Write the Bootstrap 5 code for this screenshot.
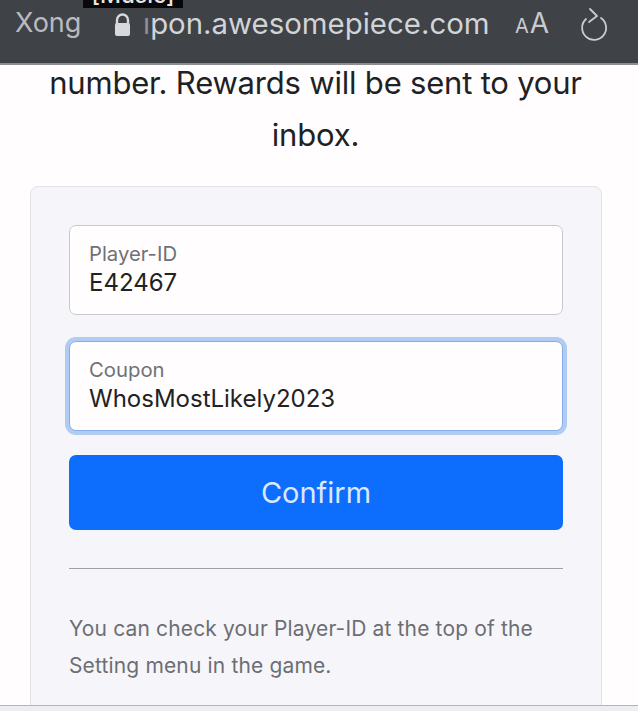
<!doctype html>
<html lang="en">
<head>
<meta charset="utf-8">
<title>Coupon</title>
<link href="https://cdn.jsdelivr.net/npm/bootstrap@5.3.0/dist/css/bootstrap.min.css" rel="stylesheet">
<style>
html,body{height:711px;overflow:hidden}
body{font-family:Inter,"Liberation Sans",sans-serif;background:#fffdfd;color:#1f2023}
.topbar{height:65px;background:#3f4247;border-bottom:2px solid #8c8d90;color:#d2d4d8;position:relative;font-size:29.4px;line-height:1;padding:5px 0 0 15px;overflow:hidden}
.caption-clip{position:absolute;left:83px;top:0;width:100px;height:8px;background:#08080a;color:#e6e6e6;font-size:23px;font-weight:500;line-height:1;text-align:center;overflow:hidden}
.caption-clip span{display:block;margin-top:-16px}
.xong{width:98px;font-size:27px;color:#b9bbbf}
.lock{width:19px;height:25px;margin-right:11px}
.urlbox{width:372px;white-space:nowrap}
.stub{color:#8f9195}
.aa{width:62px;font-size:28px;color:#c9cbcf}
.aa small{font-size:20px;margin-right:1px}
.reload{width:34px;height:36px;margin-top:1px}
.headline{font-size:31px;line-height:52px;text-align:center;margin:-8px 0 25px;padding-right:7px;letter-spacing:-.2px;color:#202124}
.panel{margin:0 36px 0 30px;height:530px;background:#f6f6fa;border:1px solid #e1e2e5;border-radius:8px;padding:38px 38px 0}
.form-floating>.form-control.fieldbox{height:90px;font-size:24px;padding:39px 19px 15px;color:#222;background:#fffdfd;border:1px solid #c9cacd;border-radius:7px;min-height:0}
.form-floating>.form-control.fieldbox.live{border-color:#84aee8;box-shadow:0 0 0 4px #b0ccf3}
.form-floating>label.fieldlabel{padding:13px 19px;font-size:20.3px;color:#6f7176;transform:none!important;opacity:1!important;height:auto}
.form-floating>label.fieldlabel::after{display:none}
.gap-one{margin-bottom:26px}
.gap-two{margin-bottom:24px}
.btn.confirm{height:75px;font-size:29px;background:#0d6efd;border:0;border-radius:7px;color:#dbe8fb}
.rule{border:0;border-top:1px solid #9fa0a3;opacity:1;margin:38px 0 41px}
.help{font-size:21px;line-height:37px;color:#6c6e73;margin:0;letter-spacing:.15px;white-space:nowrap}
.bottomline{position:absolute;left:0;right:0;top:705px;height:6px;background:#eeeef2;border-top:1px solid #b4b5b8}
</style>
</head>
<body>
<div class="topbar d-flex align-items-start">
  <div class="caption-clip"><span>[Music]</span></div>
  <span class="xong pt-1">Xong</span>
  <svg class="lock mt-2" viewBox="0 0 19 25" aria-hidden="true"><path d="M4 11V7a5.5 5.5 0 0 1 11 0v4" fill="none" stroke="#d8d9db" stroke-width="2.4"/><rect x="2" y="10" width="15" height="13" rx="2" fill="#d8d9db"/></svg>
  <span class="urlbox pt-1"><span class="stub">&#x131;</span>pon.awesomepiece.com</span>
  <span class="aa pt-1"><small>A</small>A</span>
  <svg class="reload" viewBox="0 0 34 36" aria-hidden="true"><path d="M9 13a12 12 0 1 0 15 -1" fill="none" stroke="#c9cbcf" stroke-width="1.8" stroke-linecap="round"/><path d="M13 3l7 7-8 6" fill="none" stroke="#c9cbcf" stroke-width="1.8" stroke-linecap="round" stroke-linejoin="round"/></svg>
</div>
<p class="headline">number. Rewards will be sent to your<br>inbox.</p>
<div class="panel">
  <form>
    <div class="form-floating gap-one">
      <input class="form-control fieldbox" id="pid" value="E42467" placeholder=" ">
      <label class="fieldlabel" for="pid">Player-ID</label>
    </div>
    <div class="form-floating gap-two">
      <input class="form-control fieldbox live" id="cpn" value="WhosMostLikely2023" placeholder=" ">
      <label class="fieldlabel" for="cpn">Coupon</label>
    </div>
    <button type="button" class="btn confirm w-100">Confirm</button>
  </form>
  <hr class="rule">
  <p class="help">You can check your Player-ID at the top of the<br>Setting menu in the game.</p>
</div>
<div class="bottomline"></div>
<script src="https://cdn.jsdelivr.net/npm/bootstrap@5.3.0/dist/js/bootstrap.bundle.min.js"></script>
</body>
</html>
